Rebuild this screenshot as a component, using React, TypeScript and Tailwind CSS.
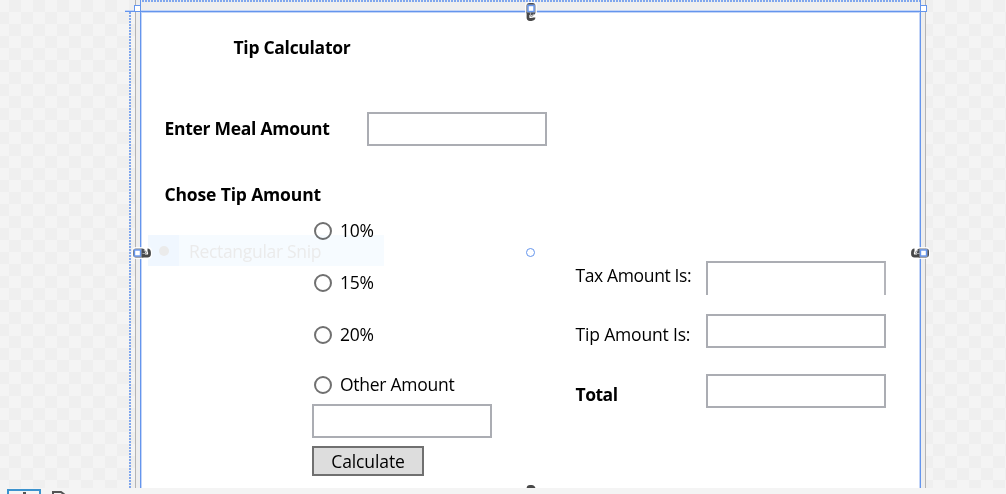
import type { ReactNode } from "react";

function Field({ open = false }: { open?: boolean }) {
  return (
    <input
      className={
        open
          ? "block h-[34px] w-[180px] border-2 border-b-0 border-[#abadb3] border-r-[#b4b5bb] bg-white px-1 outline-none"
          : "block h-[34px] w-[180px] border-2 border-[#abadb3] bg-white px-1 outline-none"
      }
    />
  );
}

function Radio({ children, className }: { children: ReactNode; className: string }) {
  return (
    <label className={`flex h-6 items-center gap-2 tracking-[-0.27px] ${className}`}>
      <span className="h-[18px] w-[18px] rounded-full border-2 border-[#707070] bg-white" />
      <span className="pb-[2px]">{children}</span>
    </label>
  );
}

function Link({ className, handle = 3.5 }: { className: string; handle?: number }) {
  return (
    <svg className={className} width="20" height="12" viewBox="0 0 20 12">
      <rect x="0" y="0" width="20" height="12" rx="4" fill="#fff" opacity=".85" />
      <rect x="1" y="1.500" width="12" height="9" rx="3" fill="#484c54" />
      <path d="M10 9H15.500Q17.500 9 17.500 7V5.500Q17.500 3 15.500 3" fill="none" stroke="#484848" strokeWidth="2.800" />
      <path d="M10.500 6.500H14.500M12 3L15 6" fill="none" stroke="#a5a5a5" strokeWidth="1.200" />
      <rect x={handle - 1} y="1.500" width="8" height="8.500" fill="#fff" opacity=".5" />
      <rect x={handle} y="3" width="6" height="6" fill="#fff" stroke="#6495ed" strokeWidth="1.400" />
    </svg>
  );
}

function Adorners() {
  return (
    <div className="pointer-events-none absolute inset-0">
      <svg className="absolute inset-0" width="1006" height="488" viewBox="0 0 1006 488" shapeRendering="crispEdges">
        <path d="M142 1H920" stroke="#6495ed" strokeWidth="2" strokeDasharray="2 1" opacity=".8" />
        <path d="M130 12V488" stroke="#6495ed" strokeWidth="2" strokeDasharray="2 1" opacity=".8" />
        <path d="M125 10.500H926M142 12.500H920" stroke="#c4d5f7" />
        <path d="M125 11.500H926" stroke="#6495ed" />
        <path d="M141.500 12V488M919.500 12V488" stroke="#c4d5f7" />
        <path d="M140.500 0V488M920.500 0V488" stroke="#6495ed" />
        <rect x="134.500" y="5.500" width="6" height="6" fill="#fff" stroke="#6495ed" />
        <rect x="920.500" y="5.500" width="6" height="6" fill="#fff" stroke="#6495ed" />
      </svg>
      <Link className="absolute left-[132px] top-[247px]" handle={2.5} />
      <Link className="absolute left-[910px] top-[247px] -scale-x-100" />
      <Link className="absolute left-[521px] top-[6px] rotate-90" />
      <Link className="absolute left-[521px] top-[488px] -scale-x-100 rotate-90" />
      <span className="absolute left-[526px] top-[248px] h-[9px] w-[9px] rounded-full border-[1.5px] border-[#6495ed] bg-white" />
    </div>
  );
}

function SnipGhost() {
  return (
    <div className="pointer-events-none absolute left-[148px] top-[235px] flex h-[31px] w-[236px] bg-[#f6fbff] text-[#ebebeb] mix-blend-multiply">
      <div className="flex w-[31px] items-center justify-center bg-[#f0f7ff]">
        <span className="h-[10px] w-[10px] rounded-full bg-[#ebebeb]" />
      </div>
      <span className="pl-[10px] pt-1 tracking-[-0.32px]">Rectangular Snip</span>
    </div>
  );
}

export default function App() {
  return (
    <div className="flex h-[494px] w-[1006px] flex-col overflow-hidden bg-[#f4f4f4] font-['Open_Sans','Noto_Sans',sans-serif] text-[17.5px] leading-6 text-black">
      <div className="relative flex h-[488px] overflow-hidden bg-[conic-gradient(#efefef_25%,#f4f4f4_0_50%,#efefef_0_75%,#f4f4f4_0)] bg-[length:24px_24px] bg-[position:-3px_0px] pl-[135px]">
        <div className="flex w-[791px] border-x border-[#b4b4b4] bg-[#eeeeee] px-[5px] pt-3">
          <main className="flex w-[779px] bg-white">
            <section className="w-[434px] pl-[23.5px]">
              <h1 className="ml-[69px] mt-[23px] font-bold tracking-[-0.29px]">Tip Calculator</h1>
              <div className="mt-[53px] flex h-[34px] items-center">
                <h2 className="w-[202.5px] pb-[2px] font-bold tracking-[-0.28px]">Enter Meal Amount</h2>
                <Field />
              </div>
              <h2 className="mt-9 font-bold tracking-[-0.15px]">Chose Tip Amount</h2>
              <div className="ml-[147.5px]">
                <Radio className="ml-[2px] mt-[13px]">10%</Radio>
                <Radio className="ml-[2px] mt-7">15%</Radio>
                <Radio className="ml-[2px] mt-7">20%</Radio>
                <Radio className="ml-[2px] mt-[26px]">Other Amount</Radio>
                <div className="mt-[7px]"><Field /></div>
                <button className="mt-2 flex h-[30px] w-[112px] items-center justify-center border-2 border-[#707070] bg-[#dddddd] tracking-[-0.1px]">Calculate</button>
              </div>
            </section>
            <section className="pt-[249px]">
              <div className="flex h-[34px]"><span className="w-[131px] pl-[0.5px] pt-[2px] tracking-[-0.37px]">Tax Amount Is:</span><Field open /></div>
              <div className="mt-[19px] flex h-[34px]"><span className="w-[131px] pl-[0.5px] pt-2 tracking-[-0.17px]">Tip Amount Is:</span><Field /></div>
              <div className="mt-[26px] flex h-[34px]"><span className="w-[131px] pl-[0.5px] pt-2 font-bold tracking-[-0.5px]">Total</span><Field /></div>
            </section>
          </main>
        </div>
        <SnipGhost />
        <Adorners />
      </div>
      <footer className="flex h-[6px] items-start overflow-hidden bg-[#f4f4f4] pl-[7px] pt-px">
        <div className="flex h-5 w-[34px] justify-center border-2 border-[#3c92cd]">
          <span className="mt-px h-2 w-[3px] bg-[#555]" />
        </div>
        <svg className="ml-[11px] mt-[2px]" width="15" height="10" viewBox="0 0 15 10">
          <path d="M1 10V1H9L13 4V10" fill="none" stroke="#555" strokeWidth="2" />
        </svg>
      </footer>
    </div>
  );
}
